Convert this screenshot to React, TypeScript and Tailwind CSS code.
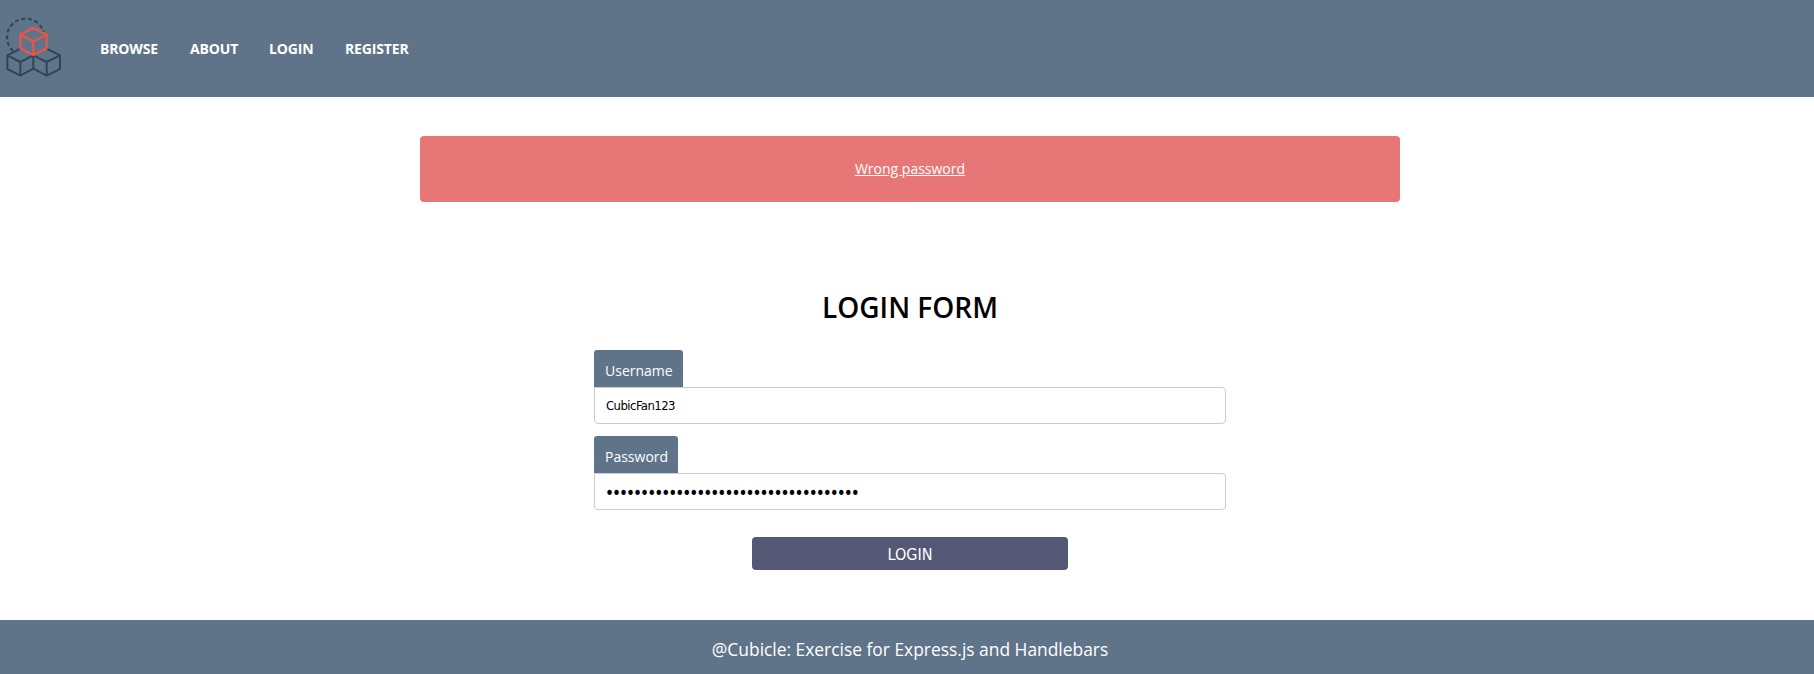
import React from "react";

const NAV_ITEMS = ["BROWSE", "ABOUT", "LOGIN", "REGISTER"];
const NAV_WIDTHS = ["w-[58px]", "w-[47px]", "w-[44px]", "w-[65px]"];

function Logo() {
  return (
    <svg className="h-[97px] w-20 shrink-0" viewBox="0 0 240 291" fill="none" strokeWidth="6" strokeLinejoin="round">
      <path d="M39 153A56 56 0 1 1 131 97" stroke="#2f455c" strokeWidth="6.5" strokeDasharray="12 8" />
      <g stroke="#2f455c">
        <path d="M59 147L22 166V207L61 227L100 206L140 227L180 207V166L142 147" />
        <path d="M22 166L61 186L100 166L140 186L180 166M61 186V227M100 166V206M140 186V227" />
      </g>
      <path d="M100 84L61 104V145L100 165L140 145V104ZM61 104L100 124L140 104M100 124V165" stroke="#f9513f" />
    </svg>
  );
}

type FieldProps = { label: string; type: string; value: string; labelWidth: string; inputClass: string };

function Field({ label, type, value, labelWidth, inputClass }: FieldProps) {
  return (
    <div className="flex flex-col items-start">
      <label className={`flex h-[37px] items-end rounded-t-[3px] bg-[#607489] pb-1.5 pl-[11px] text-[14px] leading-[20px] whitespace-nowrap text-white ${labelWidth}`}>
        {label}
      </label>
      <input
        type={type}
        defaultValue={value}
        className={`h-[37px] w-full rounded-[4px] rounded-tl-none border border-[#cccccc] bg-white text-black outline-none ${inputClass}`}
      />
    </div>
  );
}

export default function App() {
  return (
    <div className="flex h-[674px] flex-col bg-white font-['Open_Sans',sans-serif] text-black">
      <header className="flex h-[97px] shrink-0 items-center bg-[#607489]">
        <Logo />
        <nav className="flex gap-8 pl-5 text-[14px] leading-5 font-bold tracking-[-0.15px] text-white">
          {NAV_ITEMS.map((item, i) => (
            <a key={item} href="#" className={`whitespace-nowrap ${NAV_WIDTHS[i]}`}>
              {item}
            </a>
          ))}
        </nav>
      </header>
      <main className="flex flex-1 flex-col items-center pt-[39px] pl-1.5">
        <div className="flex h-[66px] w-[980px] items-center justify-center rounded-[4px] bg-[#e77776] pb-0.5 text-[14px] text-white">
          <span className="underline">Wrong password</span>
        </div>
        <form className="flex w-[632px] flex-col pt-[86px]">
          <h1 className="mb-[24px] text-center text-[28px] leading-[38px] font-semibold">LOGIN FORM</h1>
          <div className="flex flex-col gap-3">
            <Field label="Username" type="text" value="CubicFan123" labelWidth="w-[89px]" inputClass="px-[11px] font-['DejaVu_Sans_Condensed','DejaVu_Sans',sans-serif] text-[13px] tracking-[-0.56px]" />
            <Field label="Password" type="password" value="correct-horse-battery-staple-cubicle" labelWidth="w-[84px]" inputClass="px-[10px] pt-0.5 font-['DejaVu_Sans_Condensed','DejaVu_Sans',sans-serif] text-[17px] tracking-[-2px]" />
          </div>
          <button type="button" className="mt-[27px] h-[33px] w-[316px] self-center rounded-[4px] bg-[#555875] pt-[3px] font-['DejaVu_Sans_Condensed','DejaVu_Sans',sans-serif] text-[16px] text-white">
            LOGIN
          </button>
        </form>
      </main>
      <footer className="flex h-[54px] shrink-0 items-center justify-center bg-[#607489] pl-1.5 text-[17.4px] text-white">
        <p className="pt-[5px]">@Cubicle: Exercise for Express.js and Handlebars</p>
      </footer>
    </div>
  );
}
